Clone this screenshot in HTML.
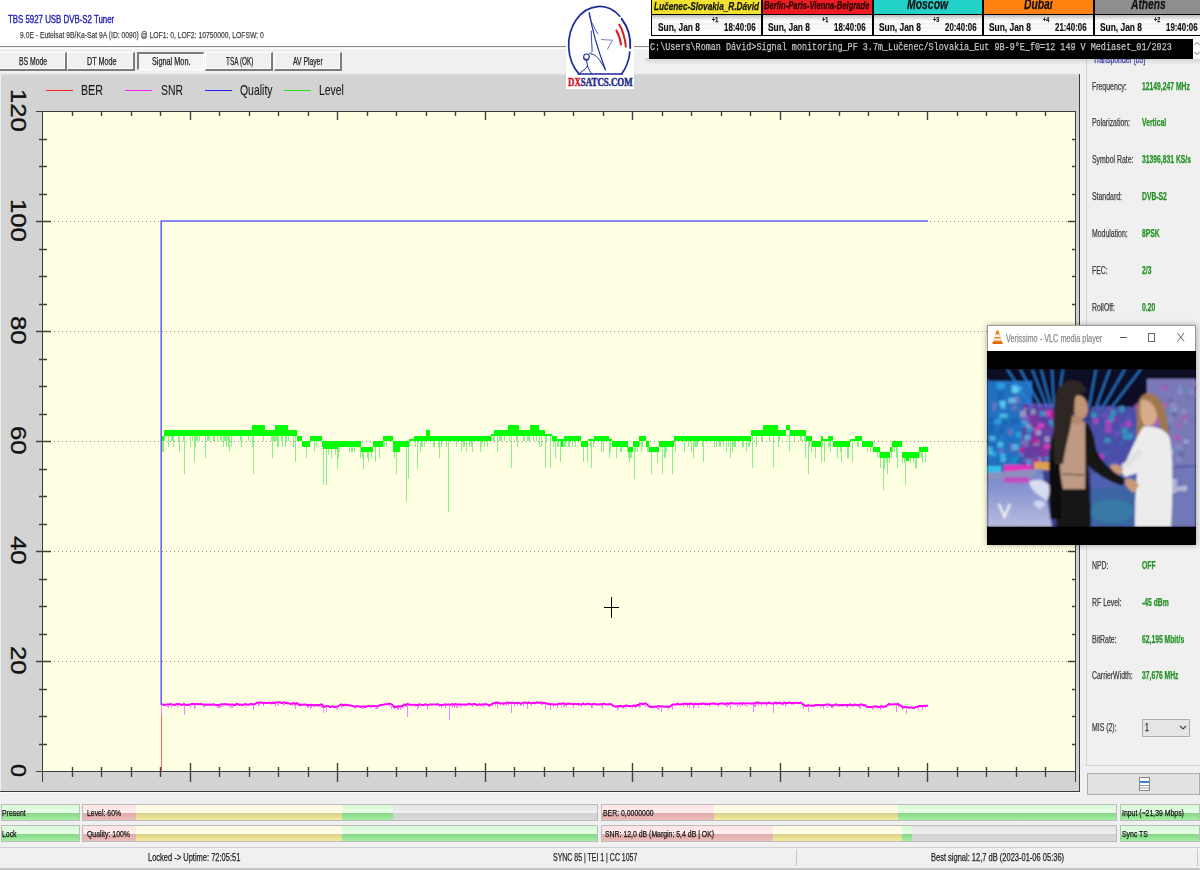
<!DOCTYPE html>
<html><head><meta charset="utf-8">
<style>
html,body{margin:0;padding:0;}
body{width:1200px;height:870px;overflow:hidden;position:relative;background:#f0f0f0;font-family:"Liberation Sans",sans-serif;}
.a{position:absolute;}
.t{position:absolute;white-space:nowrap;transform-origin:0 0;line-height:1;-webkit-text-stroke:0.25px currentColor;}
.tab{position:absolute;top:52px;height:19px;background:#f0f0f0;border-top:1px solid #fff;border-left:1px solid #fff;border-right:2px solid #7c7c7c;border-bottom:2px solid #7c7c7c;box-sizing:border-box;box-shadow:inset -1px -1px 0 #fafafa;}
.bar{position:absolute;height:17px;border:1px solid #bcbcbc;box-sizing:border-box;overflow:hidden;background:linear-gradient(#e4e4e4 0,#efefef 55%,#d2d2d2 55%,#d8d8d8 100%);}
.seg{position:absolute;top:0;bottom:0;}
.pk{background:linear-gradient(#ffe4e4 0,#ffeeee 55%,#e0acac 55%,#eebcbc 100%);}
.yl{background:linear-gradient(#fffce0 0,#fffeea 55%,#d8d08a 55%,#f4ee9c 100%);}
.gr{background:linear-gradient(#dafada 0,#e6fde6 55%,#88d488 55%,#a2f2a2 100%);}
.lbl{font-size:10px;color:#3a3a3a;}
.val{font-size:10px;color:#1e8c1e;font-weight:bold;}
</style></head><body>
<!-- top white header -->
<div class="a" style="left:0;top:0;width:1200px;height:46px;background:#fff"></div>
<div class="a" style="left:0;top:46px;width:1200px;height:1px;background:#8c8c8c"></div><div class="a" style="left:0;top:48px;width:1200px;height:1px;background:#fff"></div>

<!-- tabs -->
<div class="tab" style="left:-1px;width:68px;"></div>
<div class="tab" style="left:67px;width:68px;"></div>
<div class="tab" style="left:137px;width:67px;height:18px;border-top:2px solid #7c7c7c;border-left:2px solid #7c7c7c;border-right:1px solid #fff;border-bottom:1px solid #fff;box-shadow:none;background:#f4f4f4"></div>
<div class="tab" style="left:205px;width:68px;"></div>
<div class="tab" style="left:274px;width:68px;"></div>

<!-- chart panel -->
<div class="a" style="left:1px;top:75px;width:1078px;height:716px;background:#d3d3d3"></div><div class="a" style="left:1px;top:73px;width:1078px;height:2px;background:linear-gradient(#ececec,#dcdcdc)"></div><div class="a" style="left:1px;top:792px;width:1079px;height:1px;background:#fafafa"></div>
<div class="a" style="left:1079px;top:74px;width:1px;height:718px;background:#3a3a3a"></div>
<div class="a" style="left:0;top:791px;width:1080px;height:1px;background:#3a3a3a"></div>
<!-- legend -->
<div class="a" style="left:46px;top:90px;width:27px;height:1px;background:#ff2020"></div>
<div class="a" style="left:125px;top:90px;width:27px;height:1px;background:#ff20ff"></div>
<div class="a" style="left:205px;top:90px;width:27px;height:1px;background:#2020ff"></div>
<div class="a" style="left:284px;top:90px;width:27px;height:1px;background:#20e020"></div>
<div class="t" style="left:29.34px;top:89.10px;font-size:21.66px;color:#111;transform:rotate(90deg) scaleX(1.185);-webkit-text-stroke:0.3px currentColor;">120</div>
<div class="t" style="left:29.34px;top:199.10px;font-size:21.66px;color:#111;transform:rotate(90deg) scaleX(1.185);-webkit-text-stroke:0.3px currentColor;">100</div>
<div class="t" style="left:29.34px;top:316.20px;font-size:21.66px;color:#111;transform:rotate(90deg) scaleX(1.187);-webkit-text-stroke:0.3px currentColor;">80</div>
<div class="t" style="left:29.34px;top:426.20px;font-size:21.66px;color:#111;transform:rotate(90deg) scaleX(1.187);-webkit-text-stroke:0.3px currentColor;">60</div>
<div class="t" style="left:29.34px;top:536.20px;font-size:21.66px;color:#111;transform:rotate(90deg) scaleX(1.187);-webkit-text-stroke:0.3px currentColor;">40</div>
<div class="t" style="left:29.34px;top:646.20px;font-size:21.66px;color:#111;transform:rotate(90deg) scaleX(1.187);-webkit-text-stroke:0.3px currentColor;">20</div>
<div class="t" style="left:29.34px;top:764.00px;font-size:21.66px;color:#111;transform:rotate(90deg) scaleX(1.082);-webkit-text-stroke:0.3px currentColor;">0</div>
<div class="a" style="left:0;top:0;">
</div>
<svg width="1200" height="870" style="position:absolute;left:0;top:0" shape-rendering="crispEdges">
<rect x="42" y="111" width="1033" height="660" fill="#ffffe4"/>
<g stroke="#8c8c8c" stroke-width="1" stroke-dasharray="1 3">
<path d="M46 221.5H1070M46 331.5H1070M46 441.5H1070M46 551.5H1070M46 661.5H1070"/>
</g>
<g stroke="#3c3c3c" stroke-width="1.5" fill="none">
<path d="M36 111.5H1075M36 771.5H1075M42.5 111V782M1075.5 111V782"/>
</g>
<path d="M72.5 767V777M72.5 111V116M101.5 767V777M101.5 111V116M131.5 767V777M131.5 111V116M160.5 767V777M160.5 111V116M190.5 763V782M190.5 111V120M219.5 767V777M219.5 111V116M249.5 767V777M249.5 111V116M278.5 767V777M278.5 111V116M308.5 767V777M308.5 111V116M337.5 763V782M337.5 111V120M367.5 767V777M367.5 111V116M396.5 767V777M396.5 111V116M426.5 767V777M426.5 111V116M455.5 767V777M455.5 111V116M485.5 763V782M485.5 111V120M514.5 767V777M514.5 111V116M544.5 767V777M544.5 111V116M573.5 767V777M573.5 111V116M603.5 767V777M603.5 111V116M632.5 763V782M632.5 111V120M662.5 767V777M662.5 111V116M691.5 767V777M691.5 111V116M721.5 767V777M721.5 111V116M750.5 767V777M750.5 111V116M780.5 763V782M780.5 111V120M809.5 767V777M809.5 111V116M839.5 767V777M839.5 111V116M868.5 767V777M868.5 111V116M898.5 767V777M898.5 111V116M927.5 763V782M927.5 111V120M957.5 767V777M957.5 111V116M986.5 767V777M986.5 111V116M1016.5 767V777M1016.5 111V116M1045.5 767V777M1045.5 111V116M39 744.5H47M1072 744.5H1075M39 716.5H47M1072 716.5H1075M39 689.5H47M1072 689.5H1075M36 661.5H51M1068 661.5H1075M39 634.5H47M1072 634.5H1075M39 606.5H47M1072 606.5H1075M39 579.5H47M1072 579.5H1075M36 551.5H51M1068 551.5H1075M39 524.5H47M1072 524.5H1075M39 496.5H47M1072 496.5H1075M39 469.5H47M1072 469.5H1075M36 441.5H51M1068 441.5H1075M39 414.5H47M1072 414.5H1075M39 386.5H47M1072 386.5H1075M39 359.5H47M1072 359.5H1075M36 331.5H51M1068 331.5H1075M39 304.5H47M1072 304.5H1075M39 276.5H47M1072 276.5H1075M39 249.5H47M1072 249.5H1075M36 221.5H51M1068 221.5H1075M39 194.5H47M1072 194.5H1075M39 166.5H47M1072 166.5H1075M39 139.5H47M1072 139.5H1075" stroke="#404040" stroke-width="1.4" fill="none" shape-rendering="auto"/>
<g fill="#00ff00" shape-rendering="crispEdges"><rect x="161" y="435.5" width="3" height="5.5"/><rect x="164" y="430.0" width="88" height="5.5"/><rect x="252" y="424.5" width="13" height="11.0"/><rect x="265" y="430.0" width="10" height="5.5"/><rect x="275" y="424.5" width="13" height="11.0"/><rect x="288" y="430.0" width="9" height="5.5"/><rect x="297" y="435.5" width="5" height="5.5"/><rect x="302" y="441.0" width="8" height="5.5"/><rect x="310" y="435.5" width="12" height="5.5"/><rect x="322" y="441.0" width="26" height="5.5"/><rect x="323" y="441.0" width="15" height="8.2"/><rect x="348" y="441.0" width="13" height="5.5"/><rect x="361" y="446.5" width="12" height="5.5"/><rect x="373" y="441.0" width="10" height="5.5"/><rect x="383" y="435.5" width="10" height="5.5"/><rect x="393" y="441.0" width="7" height="11.0"/><rect x="400" y="441.0" width="9" height="5.5"/><rect x="409" y="439.4" width="5" height="1.6"/><rect x="414" y="435.5" width="56" height="5.5"/><rect x="426" y="430.0" width="4" height="5.5"/><rect x="465" y="435.5" width="26" height="5.5"/><rect x="491" y="433.9" width="3" height="1.6"/><rect x="494" y="430.0" width="14" height="5.5"/><rect x="508" y="424.5" width="11" height="11.0"/><rect x="519" y="430.0" width="11" height="5.5"/><rect x="530" y="424.5" width="9" height="11.0"/><rect x="539" y="430.0" width="6" height="5.5"/><rect x="545" y="433.9" width="7" height="1.6"/><rect x="552" y="435.5" width="5" height="5.5"/><rect x="557" y="439.4" width="7" height="1.6"/><rect x="561" y="441.0" width="2" height="5.5"/><rect x="564" y="435.5" width="17" height="5.5"/><rect x="581" y="441.0" width="7" height="5.5"/><rect x="588" y="439.4" width="6" height="1.6"/><rect x="594" y="435.5" width="15" height="5.5"/><rect x="609" y="439.4" width="3" height="1.6"/><rect x="612" y="441.0" width="16" height="5.5"/><rect x="628" y="446.5" width="5" height="5.5"/><rect x="633" y="441.0" width="6" height="5.5"/><rect x="639" y="435.5" width="7" height="5.5"/><rect x="646" y="441.0" width="3" height="5.5"/><rect x="649" y="446.5" width="10" height="5.5"/><rect x="659" y="441.0" width="15" height="5.5"/><rect x="674" y="435.5" width="77" height="5.5"/><rect x="751" y="430.0" width="12" height="5.5"/><rect x="763" y="424.5" width="15" height="11.0"/><rect x="778" y="430.0" width="8" height="5.5"/><rect x="786" y="424.5" width="4" height="5.5"/><rect x="790" y="430.0" width="16" height="5.5"/><rect x="806" y="435.5" width="6" height="5.5"/><rect x="812" y="441.0" width="9" height="5.5"/><rect x="821" y="435.5" width="2" height="5.5"/><rect x="823" y="439.4" width="5" height="1.6"/><rect x="828" y="435.5" width="5" height="5.5"/><rect x="833" y="441.0" width="17" height="5.5"/><rect x="850" y="439.4" width="5" height="1.6"/><rect x="855" y="435.5" width="7" height="5.5"/><rect x="862" y="441.0" width="11" height="5.5"/><rect x="873" y="446.5" width="7" height="5.5"/><rect x="880" y="452.0" width="10" height="5.5"/><rect x="890" y="446.5" width="2" height="5.5"/><rect x="892" y="441.0" width="10" height="5.5"/><rect x="902" y="452.0" width="17" height="5.5"/><rect x="906" y="457.5" width="3" height="3.3"/><rect x="919" y="446.5" width="9" height="5.5"/></g>
<path d="M163.0 441.0V451.7M168.0 435.5V447.0M173.0 435.5V447.0M179.0 435.5V451.7M184.0 435.5V474.0M194.0 435.5V462.0M205.0 435.5V457.7M229.0 435.5V451.7M253.0 435.5V474.0M272.0 435.5V457.7M295.0 435.5V462.0M306.0 446.5V457.7M323.3 449.2V485.0M326.7 449.2V485.0M331.3 449.2V457.7M337.3 449.2V469.0M363.3 452.0V469.0M368.7 452.0V462.3M371.3 452.0V457.7M375.7 446.5V462.3M396.7 452.0V474.0M406.7 446.5V501.7M408.7 446.5V479.0M417.7 441.0V469.0M439.3 441.0V457.7M448.7 441.0V512.3M511.7 435.5V468.3M497.7 435.5V451.7M545.0 435.5V468.3M550.0 435.5V468.3M555.7 441.0V457.7M560.7 441.0V462.3M583.7 446.5V462.3M587.0 446.5V462.3M591.7 441.0V468.3M609.7 441.0V457.7M601.0 441.0V451.7M634.0 446.5V479.0M651.6 452.0V473.7M662.0 446.5V473.7M672.7 446.5V473.7M693.0 441.0V457.7M703.7 441.0V462.3M730.0 441.0V457.7M752.7 435.5V468.3M773.7 435.5V468.3M630.7 452.0V457.7M641.0 441.0V451.7M808.0 441.0V473.7M789.7 430.0V451.7M805.0 435.5V457.7M815.0 446.5V457.7M821.0 441.0V462.3M824.0 441.0V462.3M841.7 446.5V462.3M852.0 441.0V462.3M847.0 446.5V457.7M880.0 457.5V468.3M883.7 457.5V490.3M887.0 457.5V473.7M897.0 446.5V468.3M905.7 457.5V485.0M916.3 457.5V468.3M925.7 452.0V462.3M870.0 446.5V451.7M409.7 441.0V446.5M464.0 441.0V446.5M217.4 435.5V441.0M441.8 441.0V446.5M857.9 441.0V446.5M190.7 435.5V446.5M481.9 441.0V446.5M231.4 435.5V446.5M207.2 435.5V441.0M886.8 457.5V463.0M603.5 441.0V452.0M199.9 435.5V441.0M197.6 435.5V441.0M383.6 441.0V446.5M575.6 441.0V446.5M590.6 441.0V446.5M240.8 435.5V441.0M446.9 441.0V446.5M593.7 441.0V446.5M541.8 435.5V446.5M756.6 435.5V446.5M610.0 441.0V452.0M438.6 441.0V446.5M769.7 435.5V441.0M224.6 435.5V441.0M563.8 441.0V446.5M720.0 441.0V446.5M627.9 446.5V452.0M252.3 435.5V446.5M288.2 435.5V441.0M278.3 435.5V446.5M484.6 441.0V446.5M746.9 441.0V446.5M422.2 441.0V446.5M616.7 446.5V457.5M214.6 435.5V441.0M884.7 457.5V468.5M695.2 441.0V446.5M208.4 435.5V441.0M657.1 452.0V463.0M379.7 446.5V457.5M840.6 446.5V452.0M179.3 435.5V446.5M433.9 441.0V446.5M539.7 435.5V441.0M749.7 441.0V446.5M726.8 441.0V452.0M461.1 441.0V452.0M223.6 435.5V446.5M469.3 441.0V446.5M837.8 446.5V457.5M822.9 441.0V446.5M702.4 441.0V446.5M684.3 441.0V452.0M894.7 446.5V452.0M225.5 435.5V441.0M339.4 446.5V452.0M171.2 435.5V441.0M363.0 452.0V457.5M273.4 435.5V441.0M628.5 452.0V457.5M891.1 452.0V457.5M511.3 435.5V446.5M466.5 441.0V452.0M241.2 435.5V446.5M209.6 435.5V441.0M915.3 457.5V468.5M286.2 435.5V441.0M621.6 446.5V452.0M162.2 441.0V446.5M572.5 441.0V446.5M631.5 452.0V457.5M830.9 441.0V452.0M275.6 435.5V441.0M892.9 446.5V452.0M524.7 435.5V441.0M811.4 441.0V452.0M529.5 435.5V441.0M227.7 435.5V441.0M735.5 441.0V446.5M528.1 435.5V441.0M557.0 441.0V446.5M889.5 457.5V463.0M274.2 435.5V441.0M742.0 441.0V446.5M910.6 457.5V463.0M694.6 441.0V446.5M558.6 441.0V446.5M434.1 441.0V446.5M569.4 441.0V446.5M648.9 446.5V452.0M778.7 435.5V446.5M728.0 441.0V446.5M314.9 441.0V452.0M434.0 441.0V446.5M919.0 452.0V457.5M523.3 435.5V441.0M691.8 441.0V446.5M504.1 435.5V441.0M892.6 446.5V452.0M223.6 435.5V441.0M335.5 449.2V454.8M420.4 441.0V452.0M639.4 441.0V446.5M528.8 435.5V441.0M773.7 435.5V441.0M800.5 435.5V441.0M858.0 441.0V446.5M527.7 435.5V441.0M494.0 435.5V441.0M228.4 435.5V446.5M516.3 435.5V441.0M716.5 441.0V446.5M921.7 452.0V457.5M277.6 435.5V446.5M779.0 435.5V441.0M629.9 452.0V463.0M664.8 446.5V452.0M281.3 435.5V441.0M178.4 435.5V441.0M564.8 441.0V446.5M493.9 435.5V441.0M794.0 435.5V441.0M183.4 435.5V441.0M386.1 441.0V446.5M746.2 441.0V446.5M360.4 446.5V457.5M800.2 435.5V441.0M858.2 441.0V446.5M848.7 446.5V457.5M794.8 435.5V441.0M568.8 441.0V446.5M829.7 441.0V446.5M627.5 446.5V452.0M293.8 435.5V446.5M635.6 446.5V452.0M587.7 446.5V452.0M684.0 441.0V452.0M762.0 435.5V441.0M837.7 446.5V452.0M352.1 446.5V452.0M194.3 435.5V441.0M550.4 435.5V441.0M743.4 441.0V446.5M501.1 435.5V441.0M691.9 441.0V452.0M550.7 435.5V446.5M550.4 435.5V441.0M696.9 441.0V446.5M867.9 446.5V452.0M804.6 435.5V441.0M480.7 441.0V452.0M500.2 435.5V441.0M675.4 441.0V452.0M217.9 435.5V441.0M761.7 435.5V441.0M880.7 457.5V463.0M271.4 435.5V441.0M902.2 457.5V463.0M733.2 441.0V446.5M466.7 441.0V452.0M286.5 435.5V441.0M285.5 435.5V446.5M922.5 452.0V463.0M421.4 441.0V446.5M434.8 441.0V446.5M714.4 441.0V446.5M420.6 441.0V452.0M499.0 435.5V441.0M456.0 441.0V446.5M553.9 441.0V446.5M248.3 435.5V441.0M905.3 457.5V463.0M226.3 435.5V441.0M192.3 435.5V441.0M368.9 452.0V457.5M789.1 430.0V435.5M472.6 441.0V452.0M697.8 441.0V446.5M375.5 446.5V452.0M487.4 441.0V446.5M367.7 452.0V457.5M647.3 446.5V452.0M226.1 435.5V441.0M213.0 435.5V441.0M509.1 435.5V441.0M922.6 452.0V463.0M870.9 446.5V452.0M637.6 446.5V452.0M565.1 441.0V446.5M879.7 452.0V457.5M362.3 452.0V457.5M316.4 441.0V446.5M642.9 441.0V446.5M383.8 441.0V446.5M368.9 452.0V457.5M922.8 452.0V457.5M173.7 435.5V441.0M555.4 441.0V446.5M877.0 452.0V457.5M665.6 446.5V457.5M664.2 446.5V457.5M904.3 457.5V463.0M688.1 441.0V446.5M424.2 441.0V446.5M471.6 441.0V446.5M913.1 457.5V463.0M172.9 435.5V441.0M491.5 435.5V441.0M226.6 435.5V446.5M828.0 441.0V446.5M620.1 446.5V452.0M196.6 435.5V441.0M282.5 435.5V446.5M164.8 435.5V441.0M897.8 446.5V452.0M349.0 446.5V452.0M328.7 449.2V454.8M162.8 441.0V452.0M226.2 435.5V441.0M546.6 435.5V441.0M351.9 446.5V452.0M231.5 435.5V441.0M272.1 435.5V441.0M463.4 441.0V446.5M394.7 452.0V457.5M226.6 435.5V441.0M665.0 446.5V457.5M746.7 441.0V452.0M276.3 435.5V441.0M195.5 435.5V446.5M723.4 441.0V446.5M858.1 441.0V446.5M794.2 435.5V441.0M227.1 435.5V441.0M263.8 435.5V441.0M896.0 446.5V457.5M801.4 435.5V441.0M642.2 441.0V446.5M536.3 435.5V441.0M511.6 435.5V441.0M734.4 441.0V446.5M666.4 446.5V452.0M732.5 441.0V452.0M354.9 446.5V452.0M809.3 441.0V446.5M719.9 441.0V446.5M338.5 446.5V457.5M539.9 435.5V446.5M220.7 435.5V441.0M748.7 441.0V446.5M221.3 435.5V441.0M415.8 441.0V446.5M637.2 446.5V452.0M171.5 435.5V441.0M533.6 435.5V441.0M691.5 441.0V452.0M384.5 441.0V446.5M517.5 435.5V446.5M748.9 441.0V446.5" stroke="#7cf07c" stroke-width="1" fill="none" opacity="0.9"/>
<path d="M184 705.5V715M194 705.5V709M204.5 705.5V708M253.5 705.2V710M295 704.5V709M323 706.5V713M326 707.5V712M337.5 707.5V710M363 707.5V709M397 707.5V710M407 705.5V717M417.5 705.5V710M427.5 705.5V709M449 705.5V720M497 704.0V708M511 704.0V713M527 704.0V709M545 704.5V709M550 705.0V710M557 705.0V708M561 705.0V708M592 705.0V708M602 705.0V709M617 707.0V711M661.6 707.5V712M672 706.2V710M693 704.9V709M730 704.6V709M753 704.5V711.5M773.5 704.0V712.5M808 706.5V712M823 706.2V709M880 707.5V710M896 705.0V712M906 708.5V714M925 706.7V708M400.4 707.5V708.7M523.8 704.0V705.6M220.5 705.5V707.5M922.9 706.8V709.8M457.9 705.5V708.3M873.9 707.5V708.6M231.1 705.5V708.0M362.3 707.5V709.2M623.6 707.0V709.3M375.9 707.5V708.7M441.4 705.5V707.5M832.3 706.0V707.8M283.7 703.5V706.4M683.4 704.9V706.8M718.3 704.7V706.6M449.7 705.5V706.7M415.5 705.5V707.1M420.8 705.5V707.3M881.0 707.5V708.9M171.0 705.5V708.0M355.7 707.5V708.6M460.5 705.5V708.2M220.4 705.5V708.4M740.1 704.6V707.3M376.7 707.5V708.6M668.4 707.5V709.8M275.9 703.8V706.8M495.7 704.0V705.6M753.5 704.4V707.0M489.2 705.5V706.6M744.7 704.6V706.4M831.9 706.0V708.1M317.6 706.0V707.2M876.1 707.5V709.3M632.4 707.0V708.3M827.2 706.0V708.0M859.6 706.0V708.1M292.6 704.5V706.3M377.5 707.5V709.0M727.1 704.7V707.0M472.8 705.5V707.0M531.6 704.0V706.3M253.6 705.2V707.5M219.5 705.5V707.5M783.0 704.0V706.1M508.5 704.0V705.7M742.8 704.6V706.4M581.1 705.0V706.5M295.6 704.5V706.6M406.3 705.5V707.2M781.2 704.0V705.4M177.4 705.5V708.2M454.9 705.5V708.0M322.7 706.3V707.9M737.4 704.6V706.6M601.3 705.0V706.7M687.4 704.9V707.0M766.6 704.0V706.7M232.8 705.5V708.3M456.2 705.5V707.8M492.4 704.6V706.2M785.0 704.0V706.9M259.3 704.0V705.9M746.2 704.5V707.2M902.7 708.3V710.3M218.0 705.5V708.4M872.0 707.5V709.6M520.1 704.0V705.9M761.1 704.0V705.4M278.3 703.5V706.4M245.3 705.5V708.2M698.3 704.8V707.5M846.6 706.0V707.2M756.3 704.0V705.0M258.1 704.0V706.1M190.8 705.5V707.9M898.3 705.2V707.4M566.1 705.0V706.9M746.3 704.5V705.7M391.8 706.1V709.0M308.7 706.0V707.5M766.7 704.0V705.0M573.2 705.0V708.0M375.1 707.5V709.1M804.1 705.7V707.2M564.6 705.0V707.1M184.4 705.5V707.3M659.0 707.5V708.6M310.5 706.0V708.8M657.1 707.5V708.7M336.3 707.5V709.3M445.2 705.5V707.5M694.3 704.9V707.3M439.2 705.5V707.3M167.2 705.5V707.1M808.5 706.5V707.6M541.2 704.0V705.4M747.9 704.5V705.9M517.8 704.0V705.5M842.3 706.0V707.2M639.1 705.5V707.7M847.8 706.0V708.0M858.5 706.0V707.1M617.0 707.0V709.8M203.6 705.5V706.5M618.0 707.0V708.8M705.0 704.8V706.2M506.0 704.0V706.4M402.4 706.8V708.0M222.7 705.5V706.8M307.9 706.0V708.3M563.5 705.0V706.9M400.5 707.5V710.0M803.9 705.6V708.6M500.5 704.0V705.2M221.9 705.5V706.7M483.4 705.5V708.3M591.3 705.0V707.5M452.8 705.5V708.0M398.2 707.5V710.1M229.1 705.5V707.9M311.7 706.0V708.1M503.5 704.0V705.6M726.0 704.7V706.6M645.2 705.0V706.5M640.4 705.0V706.8M449.3 705.5V707.4M776.6 704.0V705.1M311.1 706.0V707.1M625.3 707.0V708.7M418.3 705.5V708.4M195.3 705.5V708.0M689.5 704.9V707.8M389.5 705.0V707.4M617.6 707.0V709.6M886.1 706.8V708.0M793.9 704.0V705.2M709.4 704.8V706.7M755.9 704.0V706.6M860.9 706.0V708.6M263.5 704.0V706.0M168.7 705.5V708.4M394.0 707.5V709.9M277.8 703.5V705.0M820.9 706.5V708.4M761.6 704.0V706.2M553.6 705.0V706.8M284.4 703.5V705.3M658.9 707.5V709.5M578.6 705.0V706.3M488.3 705.5V706.7M217.2 705.5V707.7M321.4 706.0V707.8M918.2 707.3V710.3M294.5 704.5V705.8M514.6 704.0V706.8M341.7 706.0V708.1M754.0 704.3V706.9M758.5 704.0V705.6M375.7 707.5V709.0" stroke="#ff80ff" stroke-width="1" fill="none"/>
<path d="M161.5 704.4L163.0 704.6L164.5 705.0L166.0 704.5L167.5 704.5L169.0 704.6L170.5 704.1L172.0 704.5L173.5 704.7L175.0 704.9L176.5 704.0L178.0 704.3L179.5 704.0L181.0 704.9L182.5 704.7L184.0 704.0L185.5 705.1L187.0 705.1L188.5 704.7L190.0 704.6L191.5 704.1L193.0 703.9L194.5 704.5L196.0 704.0L197.5 704.1L199.0 704.2L200.5 703.9L202.0 704.5L203.5 704.4L205.0 704.9L206.5 704.5L208.0 704.7L209.5 704.5L211.0 704.7L212.5 704.4L214.0 704.2L215.5 705.1L217.0 705.1L218.5 704.9L220.0 704.7L221.5 704.3L223.0 704.2L224.5 704.2L226.0 704.0L227.5 704.8L229.0 704.4L230.5 704.9L232.0 704.4L233.5 705.0L235.0 704.9L236.5 703.9L238.0 704.2L239.5 705.0L241.0 704.5L242.5 705.1L244.0 704.4L245.5 704.0L247.0 704.7L248.5 704.8L250.0 704.2L251.5 704.0L253.0 704.3L254.5 704.3L256.0 703.3L257.5 702.5L259.0 702.7L260.5 702.5L262.0 702.5L263.5 703.4L265.0 702.6L266.5 703.1L268.0 702.9L269.5 702.6L271.0 703.3L272.5 702.6L274.0 703.2L275.5 702.5L277.0 702.6L278.5 702.2L280.0 702.2L281.5 703.1L283.0 702.9L284.5 702.3L286.0 703.3L287.5 703.0L289.0 703.4L290.5 703.9L292.0 703.7L293.5 703.0L295.0 704.1L296.5 703.2L298.0 703.7L299.5 705.1L301.0 704.8L302.5 704.8L304.0 704.5L305.5 704.5L307.0 705.1L308.5 704.7L310.0 705.1L311.5 704.8L313.0 704.9L314.5 705.6L316.0 705.0L317.5 705.1L319.0 705.4L320.5 704.6L322.0 704.6L323.5 706.2L325.0 706.9L326.5 706.2L328.0 706.1L329.5 706.8L331.0 707.0L332.5 706.1L334.0 707.0L335.5 707.0L337.0 706.6L338.5 706.2L340.0 705.0L341.5 704.4L343.0 705.6L344.5 704.7L346.0 705.2L347.5 704.7L349.0 705.4L350.5 705.4L352.0 705.8L353.5 706.1L355.0 706.8L356.5 706.0L358.0 706.2L359.5 706.6L361.0 706.9L362.5 706.6L364.0 706.2L365.5 707.0L367.0 706.1L368.5 705.9L370.0 706.2L371.5 706.4L373.0 706.0L374.5 706.1L376.0 706.3L377.5 706.6L379.0 705.6L380.5 705.1L382.0 705.0L383.5 704.6L385.0 704.2L386.5 704.2L388.0 704.1L389.5 703.6L391.0 704.1L392.5 705.0L394.0 707.0L395.5 706.7L397.0 707.1L398.5 705.9L400.0 706.7L401.5 706.2L403.0 705.8L404.5 704.5L406.0 705.1L407.5 704.0L409.0 704.6L410.5 704.8L412.0 705.0L413.5 704.8L415.0 704.7L416.5 704.9L418.0 705.0L419.5 704.3L421.0 704.7L422.5 705.0L424.0 704.9L425.5 704.4L427.0 704.8L428.5 704.9L430.0 704.6L431.5 704.6L433.0 704.4L434.5 704.6L436.0 704.6L437.5 704.0L439.0 704.7L440.5 705.1L442.0 705.0L443.5 704.8L445.0 704.4L446.5 704.8L448.0 704.6L449.5 704.4L451.0 704.9L452.5 704.0L454.0 704.8L455.5 703.9L457.0 704.6L458.5 704.5L460.0 704.2L461.5 704.7L463.0 704.5L464.5 704.6L466.0 705.0L467.5 704.2L469.0 703.9L470.5 704.3L472.0 704.7L473.5 704.1L475.0 704.1L476.5 705.0L478.0 704.7L479.5 704.4L481.0 705.0L482.5 704.3L484.0 704.7L485.5 704.1L487.0 704.4L488.5 704.9L490.0 705.0L491.5 704.4L493.0 703.2L494.5 703.1L496.0 702.8L497.5 702.6L499.0 703.0L500.5 703.4L502.0 703.4L503.5 703.3L505.0 703.5L506.5 702.7L508.0 702.6L509.5 702.9L511.0 702.7L512.5 702.7L514.0 702.9L515.5 703.2L517.0 703.0L518.5 702.8L520.0 703.4L521.5 703.6L523.0 702.9L524.5 702.5L526.0 702.4L527.5 703.4L529.0 702.4L530.5 703.3L532.0 703.1L533.5 702.8L535.0 703.3L536.5 702.4L538.0 702.6L539.5 702.9L541.0 702.4L542.5 703.4L544.0 702.9L545.5 703.2L547.0 703.5L548.5 704.2L550.0 703.9L551.5 704.2L553.0 704.2L554.5 704.4L556.0 704.6L557.5 704.2L559.0 703.6L560.5 704.0L562.0 703.6L563.5 703.4L565.0 704.0L566.5 704.3L568.0 703.6L569.5 703.7L571.0 703.8L572.5 704.2L574.0 704.0L575.5 704.1L577.0 704.3L578.5 703.9L580.0 704.4L581.5 704.5L583.0 703.5L584.5 704.5L586.0 704.3L587.5 703.6L589.0 703.9L590.5 704.2L592.0 704.5L593.5 703.9L595.0 704.1L596.5 704.5L598.0 704.4L599.5 704.5L601.0 704.0L602.5 704.2L604.0 703.6L605.5 704.3L607.0 704.4L608.5 704.2L610.0 704.3L611.5 704.3L613.0 705.7L614.5 706.4L616.0 706.6L617.5 706.0L619.0 706.3L620.5 705.8L622.0 706.5L623.5 706.4L625.0 705.8L626.5 705.5L628.0 705.9L629.5 706.1L631.0 706.3L632.5 706.0L634.0 705.4L635.5 706.4L637.0 705.0L638.5 705.1L640.0 703.6L641.5 703.8L643.0 704.3L644.5 703.6L646.0 703.6L647.5 705.0L649.0 706.1L650.5 706.9L652.0 706.7L653.5 707.0L655.0 706.5L656.5 707.0L658.0 706.0L659.5 706.2L661.0 706.5L662.5 706.2L664.0 706.8L665.5 706.7L667.0 706.5L668.5 706.9L670.0 706.6L671.5 705.3L673.0 704.5L674.5 704.4L676.0 704.5L677.5 703.6L679.0 704.4L680.5 704.5L682.0 704.0L683.5 704.0L685.0 703.6L686.5 704.0L688.0 703.9L689.5 704.0L691.0 703.3L692.5 704.4L694.0 703.9L695.5 703.7L697.0 704.2L698.5 703.9L700.0 703.8L701.5 704.1L703.0 703.3L704.5 703.9L706.0 703.7L707.5 704.3L709.0 704.3L710.5 703.5L712.0 703.7L713.5 703.3L715.0 703.7L716.5 704.1L718.0 704.2L719.5 703.7L721.0 703.5L722.5 703.3L724.0 703.8L725.5 704.2L727.0 703.2L728.5 704.0L730.0 703.1L731.5 703.3L733.0 703.3L734.5 703.8L736.0 703.4L737.5 703.4L739.0 703.7L740.5 703.1L742.0 703.8L743.5 703.1L745.0 703.6L746.5 703.2L748.0 703.2L749.5 703.6L751.0 703.4L752.5 703.4L754.0 703.2L755.5 703.1L757.0 702.6L758.5 702.6L760.0 703.2L761.5 703.2L763.0 703.0L764.5 703.4L766.0 703.1L767.5 703.4L769.0 702.7L770.5 703.3L772.0 703.4L773.5 703.5L775.0 702.8L776.5 702.8L778.0 703.5L779.5 702.7L781.0 703.6L782.5 703.5L784.0 702.6L785.5 702.7L787.0 703.3L788.5 702.7L790.0 702.5L791.5 703.4L793.0 702.9L794.5 703.3L796.0 702.6L797.5 702.9L799.0 703.2L800.5 702.6L802.0 703.5L803.5 704.7L805.0 705.6L806.5 706.1L808.0 705.0L809.5 705.5L811.0 705.8L812.5 705.5L814.0 705.7L815.5 705.1L817.0 705.0L818.5 705.0L820.0 704.9L821.5 705.5L823.0 705.3L824.5 705.1L826.0 704.6L827.5 704.6L829.0 704.6L830.5 705.4L832.0 705.6L833.5 705.5L835.0 704.5L836.5 704.5L838.0 705.5L839.5 705.0L841.0 705.3L842.5 704.8L844.0 705.0L845.5 705.0L847.0 704.9L848.5 705.1L850.0 704.4L851.5 705.2L853.0 705.4L854.5 704.6L856.0 704.9L857.5 705.3L859.0 704.9L860.5 704.6L862.0 704.6L863.5 705.2L865.0 705.0L866.5 706.5L868.0 706.9L869.5 706.7L871.0 706.9L872.5 706.7L874.0 706.4L875.5 706.6L877.0 706.5L878.5 707.1L880.0 706.9L881.5 706.2L883.0 707.0L884.5 706.8L886.0 706.2L887.5 705.3L889.0 703.9L890.5 704.5L892.0 704.5L893.5 704.2L895.0 704.3L896.5 704.3L898.0 703.9L899.5 705.3L901.0 705.6L902.5 707.0L904.0 707.5L905.5 706.9L907.0 707.3L908.5 707.7L910.0 707.6L911.5 707.2L913.0 708.0L914.5 707.7L916.0 706.9L917.5 706.8L919.0 706.1L920.5 706.0L922.0 705.7L923.5 706.3L925.0 705.8L926.5 705.8L928.0 705.8" stroke="#ff00ff" stroke-width="2" fill="none" shape-rendering="auto"/>
<path d="M161.5 771V716" stroke="#ff6060" stroke-width="1.5"/>
<path d="M161.5 716V705" stroke="#ff80d0" stroke-width="1.5"/>
<path d="M161.2 705V221H928" stroke="#6464f6" stroke-width="1.6" fill="none" shape-rendering="auto"/>
<path d="M611.5 597V618M604 607.5H619" stroke="#000" stroke-width="1.6"/>
</svg>

<!-- right panel -->
<div class="a" style="left:1086px;top:36px;width:1px;height:730px;background:#d4d4d4"></div>
<div class="a" style="left:1086px;top:765px;width:114px;height:1px;background:#d4d4d4"></div>
<div class="a" style="left:1142px;top:719px;width:48px;height:18px;box-sizing:border-box;border:1px solid #adadad;background:#e5e5e5"></div>
<svg class="a" style="left:1179px;top:725px" width="8" height="6"><path d="M1 1L4 4L7 1" stroke="#444" stroke-width="1.2" fill="none"/></svg>
<div class="a" style="left:1087px;top:773px;width:113px;height:22px;box-sizing:border-box;border:1px solid #adadad;background:#e1e1e1"></div>
<svg class="a" style="left:1139px;top:777px" width="11" height="14"><rect x="0.5" y="0.5" width="10" height="13" fill="#fff" stroke="#888"/><rect x="1" y="4" width="9" height="2" fill="#3c84d8"/><path d="M1 8.5H10M1 11H10" stroke="#999"/></svg>

<!-- bottom bars -->
<div class="bar gr" style="left:1px;top:804px;width:79px;"></div>
<div class="bar" style="left:82px;top:804px;width:516px;"><div class="seg pk" style="left:0;width:53px"></div><div class="seg yl" style="left:53px;width:206px"></div><div class="seg gr" style="left:259px;width:51px"></div></div>
<div class="bar" style="left:601px;top:804px;width:516px;"><div class="seg pk" style="left:0;width:112px"></div><div class="seg yl" style="left:112px;width:184px"></div><div class="seg gr" style="left:296px;width:220px"></div></div>
<div class="bar gr" style="left:1120px;top:804px;width:80px;"></div>
<div class="bar gr" style="left:1px;top:825px;width:79px;"></div>
<div class="bar" style="left:82px;top:825px;width:516px;"><div class="seg pk" style="left:0;width:53px"></div><div class="seg yl" style="left:53px;width:206px"></div><div class="seg gr" style="left:259px;width:257px"></div></div>
<div class="bar" style="left:601px;top:825px;width:516px;"><div class="seg pk" style="left:0;width:171px"></div><div class="seg yl" style="left:171px;width:129px"></div><div class="seg gr" style="left:300px;width:10px"></div></div>
<div class="bar gr" style="left:1120px;top:825px;width:80px;"></div>
<!-- status bar -->
<div class="a" style="left:0;top:847px;width:1200px;height:1px;background:#d0d0d0"></div>
<div class="a" style="left:796px;top:849px;width:1px;height:17px;background:#c8c8c8"></div><div class="a" style="left:1197px;top:849px;width:1px;height:17px;background:#c8c8c8"></div>
<div class="a" style="left:0;top:868px;width:1200px;height:2px;background:#c4c4c4"></div>

<div class="t" style="left:7.50px;top:13.70px;font-size:11.34px;color:#2222b4;transform:scaleX(0.694);font-family:'Liberation Sans',sans-serif;-webkit-text-stroke:0.4px currentColor;">TBS 5927 USB DVB-S2 Tuner</div>
<div class="t" style="left:20.00px;top:30.00px;font-size:9.45px;color:#454545;transform:scaleX(0.717);font-family:'Liberation Sans',sans-serif;">9.0E - Eutelsat 9B/Ka-Sat 9A (ID: 0090) @ LOF1: 0, LOF2: 10750000, LOFSW: 0</div>
<div class="t" style="left:19.20px;top:56.51px;font-size:10.03px;color:#1e1e1e;transform:scaleX(0.679);font-family:'Liberation Sans',sans-serif;">BS Mode</div>
<div class="t" style="left:87.00px;top:56.51px;font-size:10.03px;color:#1e1e1e;transform:scaleX(0.721);font-family:'Liberation Sans',sans-serif;">DT Mode</div>
<div class="t" style="left:151.50px;top:57.31px;font-size:10.03px;color:#1e1e1e;transform:scaleX(0.727);font-family:'Liberation Sans',sans-serif;">Signal Mon.</div>
<div class="t" style="left:225.70px;top:56.51px;font-size:10.03px;color:#1e1e1e;transform:scaleX(0.641);font-family:'Liberation Sans',sans-serif;">TSA (OK)</div>
<div class="t" style="left:292.70px;top:56.51px;font-size:10.03px;color:#1e1e1e;transform:scaleX(0.677);font-family:'Liberation Sans',sans-serif;">AV Player</div>
<div class="t" style="left:81.30px;top:82.26px;font-size:15.41px;color:#1a1a1a;transform:scaleX(0.692);font-family:'Liberation Sans',sans-serif;-webkit-text-stroke:0.1px currentColor;">BER</div>
<div class="t" style="left:161.30px;top:82.26px;font-size:15.41px;color:#1a1a1a;transform:scaleX(0.673);font-family:'Liberation Sans',sans-serif;-webkit-text-stroke:0.1px currentColor;">SNR</div>
<div class="t" style="left:240.00px;top:82.26px;font-size:15.41px;color:#1a1a1a;transform:scaleX(0.678);font-family:'Liberation Sans',sans-serif;-webkit-text-stroke:0.1px currentColor;">Quality</div>
<div class="t" style="left:319.20px;top:82.26px;font-size:15.41px;color:#1a1a1a;transform:scaleX(0.673);font-family:'Liberation Sans',sans-serif;-webkit-text-stroke:0.1px currentColor;">Level</div>
<div class="t" style="left:1092.00px;top:81.53px;font-size:10.00px;color:#3c3c3c;transform:scaleX(0.691);font-family:'Liberation Sans',sans-serif;">Frequency:</div>
<div class="t" style="left:1142.30px;top:81.53px;font-size:10.00px;font-weight:bold;color:#239023;transform:scaleX(0.677);font-family:'Liberation Sans',sans-serif;">12149,247 MHz</div>
<div class="t" style="left:1092.00px;top:118.43px;font-size:10.00px;color:#3c3c3c;transform:scaleX(0.691);font-family:'Liberation Sans',sans-serif;">Polarization:</div>
<div class="t" style="left:1142.30px;top:118.43px;font-size:10.00px;font-weight:bold;color:#239023;transform:scaleX(0.677);font-family:'Liberation Sans',sans-serif;">Vertical</div>
<div class="t" style="left:1092.00px;top:155.33px;font-size:10.00px;color:#3c3c3c;transform:scaleX(0.691);font-family:'Liberation Sans',sans-serif;">Symbol Rate:</div>
<div class="t" style="left:1142.30px;top:155.33px;font-size:10.00px;font-weight:bold;color:#239023;transform:scaleX(0.677);font-family:'Liberation Sans',sans-serif;">31396,831 KS/s</div>
<div class="t" style="left:1092.00px;top:192.23px;font-size:10.00px;color:#3c3c3c;transform:scaleX(0.691);font-family:'Liberation Sans',sans-serif;">Standard:</div>
<div class="t" style="left:1142.30px;top:192.23px;font-size:10.00px;font-weight:bold;color:#239023;transform:scaleX(0.677);font-family:'Liberation Sans',sans-serif;">DVB-S2</div>
<div class="t" style="left:1092.00px;top:229.13px;font-size:10.00px;color:#3c3c3c;transform:scaleX(0.691);font-family:'Liberation Sans',sans-serif;">Modulation:</div>
<div class="t" style="left:1142.30px;top:229.13px;font-size:10.00px;font-weight:bold;color:#239023;transform:scaleX(0.677);font-family:'Liberation Sans',sans-serif;">8PSK</div>
<div class="t" style="left:1092.00px;top:266.03px;font-size:10.00px;color:#3c3c3c;transform:scaleX(0.691);font-family:'Liberation Sans',sans-serif;">FEC:</div>
<div class="t" style="left:1142.30px;top:266.03px;font-size:10.00px;font-weight:bold;color:#239023;transform:scaleX(0.677);font-family:'Liberation Sans',sans-serif;">2/3</div>
<div class="t" style="left:1092.00px;top:302.93px;font-size:10.00px;color:#3c3c3c;transform:scaleX(0.691);font-family:'Liberation Sans',sans-serif;">RollOff:</div>
<div class="t" style="left:1142.30px;top:302.93px;font-size:10.00px;font-weight:bold;color:#239023;transform:scaleX(0.677);font-family:'Liberation Sans',sans-serif;">0.20</div>
<div class="t" style="left:1092.00px;top:561.23px;font-size:10.00px;color:#3c3c3c;transform:scaleX(0.691);font-family:'Liberation Sans',sans-serif;">NPD:</div>
<div class="t" style="left:1142.30px;top:561.23px;font-size:10.00px;font-weight:bold;color:#239023;transform:scaleX(0.677);font-family:'Liberation Sans',sans-serif;">OFF</div>
<div class="t" style="left:1092.00px;top:597.93px;font-size:10.00px;color:#3c3c3c;transform:scaleX(0.691);font-family:'Liberation Sans',sans-serif;">RF Level:</div>
<div class="t" style="left:1142.30px;top:597.93px;font-size:10.00px;font-weight:bold;color:#239023;transform:scaleX(0.677);font-family:'Liberation Sans',sans-serif;">-45 dBm</div>
<div class="t" style="left:1092.00px;top:634.63px;font-size:10.00px;color:#3c3c3c;transform:scaleX(0.691);font-family:'Liberation Sans',sans-serif;">BitRate:</div>
<div class="t" style="left:1142.30px;top:634.63px;font-size:10.00px;font-weight:bold;color:#239023;transform:scaleX(0.677);font-family:'Liberation Sans',sans-serif;">62,195 Mbit/s</div>
<div class="t" style="left:1092.00px;top:671.33px;font-size:10.00px;color:#3c3c3c;transform:scaleX(0.691);font-family:'Liberation Sans',sans-serif;">CarrierWidth:</div>
<div class="t" style="left:1142.30px;top:671.33px;font-size:10.00px;font-weight:bold;color:#239023;transform:scaleX(0.677);font-family:'Liberation Sans',sans-serif;">37,676 MHz</div>
<div class="t" style="left:1092.00px;top:722.53px;font-size:10.00px;color:#3c3c3c;transform:scaleX(0.691);font-family:'Liberation Sans',sans-serif;">MIS (2):</div>
<div class="t" style="left:1145.00px;top:722.53px;font-size:10.00px;color:#222;transform:scaleX(0.691);font-family:'Liberation Sans',sans-serif;">1</div>
<div class="t" style="left:1092.50px;top:54.53px;font-size:10.00px;color:#3a3ab0;transform:scaleX(0.691);font-family:'Liberation Sans',sans-serif;">Transponder [b5]</div>
<div class="t" style="left:1.60px;top:808.48px;font-size:9.59px;color:#141414;transform:scaleX(0.720);font-family:'Liberation Sans',sans-serif;">Present</div>
<div class="t" style="left:86.70px;top:808.48px;font-size:9.59px;color:#141414;transform:scaleX(0.720);font-family:'Liberation Sans',sans-serif;">Level: 60%</div>
<div class="t" style="left:603.30px;top:808.48px;font-size:9.59px;color:#141414;transform:scaleX(0.720);font-family:'Liberation Sans',sans-serif;">BER: 0,0000000</div>
<div class="t" style="left:1121.70px;top:808.48px;font-size:9.59px;color:#141414;transform:scaleX(0.720);font-family:'Liberation Sans',sans-serif;">Input (~21,39 Mbps)</div>
<div class="t" style="left:1.60px;top:828.88px;font-size:9.59px;color:#141414;transform:scaleX(0.720);font-family:'Liberation Sans',sans-serif;">Lock</div>
<div class="t" style="left:86.70px;top:828.88px;font-size:9.59px;color:#141414;transform:scaleX(0.720);font-family:'Liberation Sans',sans-serif;">Quality: 100%</div>
<div class="t" style="left:605.00px;top:828.88px;font-size:9.59px;color:#141414;transform:scaleX(0.720);font-family:'Liberation Sans',sans-serif;">SNR: 12,0 dB (Margin: 5,4 dB | OK)</div>
<div class="t" style="left:1121.70px;top:828.88px;font-size:9.59px;color:#141414;transform:scaleX(0.720);font-family:'Liberation Sans',sans-serif;">Sync TS</div>
<div class="t" style="left:147.80px;top:852.07px;font-size:10.90px;color:#222;transform:scaleX(0.689);font-family:'Liberation Sans',sans-serif;">Locked -&gt; Uptime: 72:05:51</div>
<div class="t" style="left:553.40px;top:852.07px;font-size:10.90px;color:#222;transform:scaleX(0.639);font-family:'Liberation Sans',sans-serif;">SYNC 85 | TEI 1 | CC 1057</div>
<div class="t" style="left:931.00px;top:852.07px;font-size:10.90px;color:#222;transform:scaleX(0.689);font-family:'Liberation Sans',sans-serif;">Best signal: 12,7 dB (2023-01-06 05:36)</div>
<div class="a" style="left:566px;top:0;width:68px;height:89px;background:#fff"></div>
<svg class="a" style="left:560px;top:0" width="80" height="92" viewBox="560 0 80 92">
<g fill="none" stroke="#1c2a9c" stroke-linecap="round">
<path d="M579 74 A30 37.7 0 0 1 619.8 16.2" stroke-width="1.7"/>
<path d="M621.6 18.8 A30 37.7 0 0 1 630.2 48" stroke-width="1.9"/>
<path d="M629.8 52 A30 37.7 0 0 1 621.5 74" stroke-width="1.7"/>
<path d="M578.5 74H622" stroke-width="1.7"/>
<path d="M589.3 12.5 C 592 30, 598 50, 605.5 70" stroke-width="1.2"/>
<path d="M589.3 12.5 C 587 14, 594 28, 598 34" stroke-width="0.8"/>
<path d="M591.3 31 C 591 40, 592.5 48, 592 51.5 C 591 53, 590 53.5, 589 54" stroke-width="0.9"/>
<path d="M591 54 C 596 54, 600 60, 605 69" stroke-width="1"/>
<circle cx="586.5" cy="56.8" r="2.8" stroke-width="1.1"/>
<path d="M583.5 58 C 584 61, 587 61, 588.5 59.5 M586.5 60 L587.5 66 C 585 70, 581 72, 578.5 74 M587.5 66 C 589 70, 590 72, 592 74" stroke-width="1"/>
</g>
<path d="M601 39.5 L612.5 40.2 L607.3 49.5" fill="none" stroke="#6a78b8" stroke-width="0.9"/>
<path d="M616 29.8 C 618.5 34, 620.5 40, 621.2 45.3" fill="none" stroke="#d42020" stroke-width="2"/>
<path d="M619 24 C 622.5 30, 625 38, 626 47.3" fill="none" stroke="#d42020" stroke-width="2"/>
<text x="568" y="85.8" font-family="Liberation Serif" font-weight="bold" font-size="11.5" textLength="64.6" lengthAdjust="spacingAndGlyphs" stroke-width="0.45"><tspan fill="#cc2030" stroke="#cc2030">DX</tspan><tspan fill="#1c2a88" stroke="#1c2a88">SATCS.COM</tspan></text>
</svg>
<div class="a" style="left:651px;top:0;width:549px;height:36px;background:#000"></div>
<div class="a" style="left:652px;top:0;width:109px;height:14px;background:#f2e22e"></div>
<div class="a" style="left:652px;top:15px;width:109px;height:19.5px;background:linear-gradient(#bcbcbc 0,#e0e0e0 3px,#f4f4f4 5px,#fff 7px,#eee 9px,#fff 11px,#f0f0f0 13px,#fff 15px,#fff 100%)"></div>
<div class="a" style="left:763px;top:0;width:109px;height:14px;background:#ee1c24"></div>
<div class="a" style="left:763px;top:15px;width:109px;height:19.5px;background:linear-gradient(#bcbcbc 0,#e0e0e0 3px,#f4f4f4 5px,#fff 7px,#eee 9px,#fff 11px,#f0f0f0 13px,#fff 15px,#fff 100%)"></div>
<div class="a" style="left:874px;top:0;width:108px;height:14px;background:#22d2c8"></div>
<div class="a" style="left:874px;top:15px;width:108px;height:19.5px;background:linear-gradient(#bcbcbc 0,#e0e0e0 3px,#f4f4f4 5px,#fff 7px,#eee 9px,#fff 11px,#f0f0f0 13px,#fff 15px,#fff 100%)"></div>
<div class="a" style="left:984px;top:0;width:109px;height:14px;background:#ff8210"></div>
<div class="a" style="left:984px;top:15px;width:109px;height:19.5px;background:linear-gradient(#bcbcbc 0,#e0e0e0 3px,#f4f4f4 5px,#fff 7px,#eee 9px,#fff 11px,#f0f0f0 13px,#fff 15px,#fff 100%)"></div>
<div class="a" style="left:1095px;top:0;width:109px;height:14px;background:#8e8e8e"></div>
<div class="a" style="left:1095px;top:15px;width:109px;height:19.5px;background:linear-gradient(#bcbcbc 0,#e0e0e0 3px,#f4f4f4 5px,#fff 7px,#eee 9px,#fff 11px,#f0f0f0 13px,#fff 15px,#fff 100%)"></div>
<div class="t" style="left:657.50px;top:20.75px;font-size:11.63px;font-weight:bold;color:#0a0a0a;transform:scaleX(0.722);font-family:'Liberation Sans',sans-serif;-webkit-text-stroke:0.15px currentColor;">Sun, Jan 8</div>
<div class="t" style="left:723.50px;top:20.75px;font-size:11.63px;font-weight:bold;color:#0a0a0a;transform:scaleX(0.677);font-family:'Liberation Sans',sans-serif;-webkit-text-stroke:0.15px currentColor;">18:40:06</div>
<div class="t" style="left:711.80px;top:16.45px;font-size:7.27px;font-weight:bold;color:#222;transform:scaleX(0.748);font-family:'Liberation Sans',sans-serif;">+1</div>
<div class="t" style="left:768.00px;top:20.75px;font-size:11.63px;font-weight:bold;color:#0a0a0a;transform:scaleX(0.722);font-family:'Liberation Sans',sans-serif;-webkit-text-stroke:0.15px currentColor;">Sun, Jan 8</div>
<div class="t" style="left:834.00px;top:20.75px;font-size:11.63px;font-weight:bold;color:#0a0a0a;transform:scaleX(0.677);font-family:'Liberation Sans',sans-serif;-webkit-text-stroke:0.15px currentColor;">18:40:06</div>
<div class="t" style="left:822.30px;top:16.45px;font-size:7.27px;font-weight:bold;color:#222;transform:scaleX(0.748);font-family:'Liberation Sans',sans-serif;">+1</div>
<div class="t" style="left:878.50px;top:20.75px;font-size:11.63px;font-weight:bold;color:#0a0a0a;transform:scaleX(0.722);font-family:'Liberation Sans',sans-serif;-webkit-text-stroke:0.15px currentColor;">Sun, Jan 8</div>
<div class="t" style="left:944.50px;top:20.75px;font-size:11.63px;font-weight:bold;color:#0a0a0a;transform:scaleX(0.677);font-family:'Liberation Sans',sans-serif;-webkit-text-stroke:0.15px currentColor;">20:40:06</div>
<div class="t" style="left:932.80px;top:16.45px;font-size:7.27px;font-weight:bold;color:#222;transform:scaleX(0.748);font-family:'Liberation Sans',sans-serif;">+3</div>
<div class="t" style="left:989.00px;top:20.75px;font-size:11.63px;font-weight:bold;color:#0a0a0a;transform:scaleX(0.722);font-family:'Liberation Sans',sans-serif;-webkit-text-stroke:0.15px currentColor;">Sun, Jan 8</div>
<div class="t" style="left:1055.00px;top:20.75px;font-size:11.63px;font-weight:bold;color:#0a0a0a;transform:scaleX(0.677);font-family:'Liberation Sans',sans-serif;-webkit-text-stroke:0.15px currentColor;">21:40:06</div>
<div class="t" style="left:1043.30px;top:16.45px;font-size:7.27px;font-weight:bold;color:#222;transform:scaleX(0.748);font-family:'Liberation Sans',sans-serif;">+4</div>
<div class="t" style="left:1099.50px;top:20.75px;font-size:11.63px;font-weight:bold;color:#0a0a0a;transform:scaleX(0.722);font-family:'Liberation Sans',sans-serif;-webkit-text-stroke:0.15px currentColor;">Sun, Jan 8</div>
<div class="t" style="left:1165.50px;top:20.75px;font-size:11.63px;font-weight:bold;color:#0a0a0a;transform:scaleX(0.677);font-family:'Liberation Sans',sans-serif;-webkit-text-stroke:0.15px currentColor;">19:40:06</div>
<div class="t" style="left:1153.80px;top:16.45px;font-size:7.27px;font-weight:bold;color:#222;transform:scaleX(0.748);font-family:'Liberation Sans',sans-serif;">+2</div>
<div class="t" style="left:653.80px;top:0.15px;font-size:11.63px;font-weight:bold;font-style:italic;color:#111;transform:scaleX(0.710);font-family:'Liberation Sans',sans-serif;">Lučenec-Slovakia_R.Dávid</div>
<div class="t" style="left:764.20px;top:0.74px;font-size:10.47px;font-weight:bold;font-style:italic;color:#2a0000;transform:scaleX(0.730);font-family:'Liberation Sans',sans-serif;">Berlin-Paris-Vienna-Belgrade</div>
<div class="t" style="left:907.00px;top:-2.68px;font-size:14.97px;font-weight:bold;font-style:italic;color:#111;transform:scaleX(0.696);font-family:'Liberation Sans',sans-serif;">Moscow</div>
<div class="t" style="left:1024.20px;top:-2.68px;font-size:14.97px;font-weight:bold;font-style:italic;color:#111;transform:scaleX(0.688);font-family:'Liberation Sans',sans-serif;">Dubai</div>
<div class="t" style="left:1131.03px;top:-2.68px;font-size:14.97px;font-weight:bold;font-style:italic;color:#111;transform:scaleX(0.685);font-family:'Liberation Sans',sans-serif;">Athens</div>
<div class="a" style="left:645px;top:58px;width:555px;height:7px;background:linear-gradient(rgba(0,0,0,0.12),rgba(0,0,0,0))"></div>
<div class="a" style="left:649px;top:36px;width:551px;height:3px;background:#fff"></div>
<div class="a" style="left:649px;top:39px;width:544px;height:20px;background:#000"></div>
<div class="a" style="left:1193px;top:36px;width:7px;height:23px;background:#fff"></div>
<svg class="a" style="left:1194px;top:41px" width="6" height="16"><path d="M0.5 4L3 1.5L5.5 4M0.5 11L3 13.5L5.5 11" stroke="#666" fill="none" stroke-width="1"/></svg>
<div class="t" style="left:649.70px;top:41.51px;font-size:11.08px;color:#c4c4c4;transform:scaleX(0.762);font-family:'Liberation Mono',monospace;">C:\Users\Roman Dávid&gt;Signal monitoring_PF 3.7m_Lučenec/Slovakia_Eut 9B-9°E_f0=12 149 V Mediaset_01/2023</div>
<div class="a" style="left:987px;top:325px;width:209px;height:220px;box-shadow:0 0 6px rgba(0,0,0,0.35);background:#000"></div>
<div class="a" style="left:987px;top:325px;width:209px;height:26px;background:#fff;box-sizing:border-box;border:1px solid #9a9a9a;border-bottom:none"></div>
<svg class="a" style="left:992px;top:329px" width="11" height="16"><path d="M4.5 1.5H6.5L10 14H1Z" fill="#f08010"/><path d="M3.6 5.5H7.4L8 8H3Z" fill="#fff"/><path d="M2.6 9.5H8.4L9 11.5H2Z" fill="#fff"/><rect x="0.5" y="13" width="10" height="2" fill="#e06a00"/></svg>
<div class="t" style="left:1006.00px;top:332.59px;font-size:10.76px;color:#8a8a8a;transform:scaleX(0.680);font-family:'Liberation Sans',sans-serif;">Verissimo - VLC media player</div>
<svg class="a" style="left:1110px;top:328px" width="86" height="20"><path d="M10 9.5H17" stroke="#555" stroke-width="1"/><rect x="38.5" y="5.5" width="6" height="8" fill="none" stroke="#666" stroke-width="1"/><path d="M67.5 5L74 13.5M74 5L67.5 13.5" stroke="#666" stroke-width="1"/></svg>
<svg class="a" style="left:987px;top:369px" width="209" height="158" viewBox="0 0 209 158">
<defs>
<filter id="bl" x="-5%" y="-5%" width="110%" height="110%"><feGaussianBlur stdDeviation="0.8"/></filter>
<linearGradient id="flr" x1="0" y1="0" x2="0" y2="1"><stop offset="0" stop-color="#7080c8"/><stop offset="1" stop-color="#b8bce0"/></linearGradient>
</defs>
<g filter="url(#bl)">
<rect width="209" height="158" fill="#3a3f8a"/>
<path d="M0 0H209V10L165 22L150 40H60L0 10Z" fill="#0c1028"/>
<rect x="0" y="12" width="45" height="95" fill="#2070c0"/>
<rect x="35" y="35" width="35" height="62" fill="#6040a0"/>
<rect x="104" y="38" width="60" height="65" fill="#4850a8"/>
<rect x="160" y="10" width="49" height="100" fill="#7a7ab8"/>
<rect x="9.5" y="59.9" width="6" height="8" fill="#2060b0" opacity="0.7"/><rect x="25.0" y="17.8" width="5" height="6" fill="#60d0f0" opacity="0.7"/><rect x="22.0" y="28.9" width="8" height="6" fill="#8070c0" opacity="0.7"/><rect x="33.5" y="53.9" width="8" height="5" fill="#1880c8" opacity="0.7"/><rect x="25.4" y="88.4" width="8" height="6" fill="#30b0e8" opacity="0.7"/><rect x="26.9" y="17.6" width="8" height="5" fill="#60d0f0" opacity="0.7"/><rect x="31.2" y="84.5" width="6" height="6" fill="#8070c0" opacity="0.7"/><rect x="28.8" y="89.3" width="8" height="6" fill="#2060b0" opacity="0.7"/><rect x="29.1" y="62.8" width="5" height="6" fill="#30b0e8" opacity="0.7"/><rect x="1.4" y="55.5" width="6" height="8" fill="#2060b0" opacity="0.7"/><rect x="31.2" y="87.3" width="6" height="8" fill="#2060b0" opacity="0.7"/><rect x="23.0" y="59.0" width="6" height="8" fill="#1880c8" opacity="0.7"/><rect x="36.2" y="72.0" width="5" height="6" fill="#8070c0" opacity="0.7"/><rect x="26.9" y="26.4" width="6" height="8" fill="#8070c0" opacity="0.7"/><rect x="22.8" y="74.8" width="5" height="8" fill="#8070c0" opacity="0.7"/><rect x="10.7" y="23.0" width="6" height="8" fill="#2060b0" opacity="0.7"/><rect x="3.5" y="82.5" width="6" height="5" fill="#30b0e8" opacity="0.7"/><rect x="11.8" y="79.7" width="5" height="5" fill="#8070c0" opacity="0.7"/><rect x="24.6" y="16.0" width="8" height="8" fill="#60d0f0" opacity="0.7"/><rect x="22.0" y="93.1" width="6" height="8" fill="#1880c8" opacity="0.7"/><rect x="39.9" y="39.3" width="5" height="5" fill="#8070c0" opacity="0.7"/><rect x="21.4" y="95.5" width="6" height="6" fill="#8070c0" opacity="0.7"/><rect x="10.5" y="72.7" width="6" height="6" fill="#60d0f0" opacity="0.7"/><rect x="38.3" y="90.9" width="6" height="6" fill="#2060b0" opacity="0.7"/><rect x="34.8" y="46.0" width="8" height="8" fill="#8070c0" opacity="0.7"/><rect x="4.1" y="97.6" width="8" height="6" fill="#2060b0" opacity="0.7"/><rect x="25.4" y="75.0" width="6" height="6" fill="#60d0f0" opacity="0.7"/><rect x="20.8" y="60.3" width="5" height="6" fill="#8070c0" opacity="0.7"/><rect x="12.6" y="45.1" width="8" height="8" fill="#1880c8" opacity="0.7"/><rect x="2.4" y="67.2" width="6" height="6" fill="#60d0f0" opacity="0.7"/><rect x="24.4" y="36.5" width="6" height="5" fill="#8070c0" opacity="0.7"/><rect x="2.4" y="71.5" width="6" height="6" fill="#2060b0" opacity="0.7"/><rect x="11.9" y="64.9" width="5" height="6" fill="#1880c8" opacity="0.7"/><rect x="12.5" y="44.5" width="8" height="6" fill="#60d0f0" opacity="0.7"/><rect x="31.5" y="21.2" width="5" height="8" fill="#1880c8" opacity="0.7"/><rect x="12.4" y="31.6" width="6" height="5" fill="#60d0f0" opacity="0.7"/><rect x="7.5" y="50.3" width="8" height="5" fill="#30b0e8" opacity="0.7"/><rect x="24.0" y="95.5" width="8" height="5" fill="#2060b0" opacity="0.7"/><rect x="32.4" y="96.5" width="5" height="6" fill="#1880c8" opacity="0.7"/><rect x="35.4" y="51.7" width="5" height="5" fill="#30b0e8" opacity="0.7"/><rect x="21.2" y="28.8" width="8" height="5" fill="#60d0f0" opacity="0.7"/><rect x="13.6" y="84.9" width="5" height="8" fill="#60d0f0" opacity="0.7"/><rect x="23.6" y="49.1" width="8" height="6" fill="#2060b0" opacity="0.7"/><rect x="13.9" y="48.7" width="6" height="8" fill="#2060b0" opacity="0.7"/><rect x="1.4" y="48.4" width="5" height="5" fill="#2060b0" opacity="0.7"/><rect x="37.7" y="89.4" width="8" height="6" fill="#8070c0" opacity="0.7"/><rect x="38.0" y="93.6" width="5" height="5" fill="#2060b0" opacity="0.7"/><rect x="33.5" y="70.3" width="8" height="6" fill="#8070c0" opacity="0.7"/><rect x="13.6" y="32.0" width="5" height="8" fill="#60d0f0" opacity="0.7"/><rect x="4.8" y="33.5" width="5" height="8" fill="#8070c0" opacity="0.7"/><rect x="37.0" y="90.9" width="6" height="8" fill="#30b0e8" opacity="0.7"/><rect x="0.5" y="77.6" width="5" height="8" fill="#60d0f0" opacity="0.7"/><rect x="9.6" y="13.7" width="8" height="6" fill="#30b0e8" opacity="0.7"/><rect x="37.6" y="65.9" width="6" height="5" fill="#60d0f0" opacity="0.7"/><rect x="38.9" y="59.6" width="5" height="6" fill="#1880c8" opacity="0.7"/><rect x="7.9" y="59.0" width="5" height="5" fill="#1880c8" opacity="0.7"/><rect x="31.7" y="93.1" width="5" height="5" fill="#2060b0" opacity="0.7"/><rect x="25.1" y="87.9" width="5" height="6" fill="#1880c8" opacity="0.7"/><rect x="10.7" y="58.4" width="6" height="5" fill="#2060b0" opacity="0.7"/><rect x="12.9" y="84.1" width="5" height="5" fill="#30b0e8" opacity="0.7"/><rect x="36.7" y="39.1" width="5" height="5" fill="#a0a0c0" opacity="0.85"/><rect x="51.1" y="54.0" width="6" height="5" fill="#e040c0" opacity="0.85"/><rect x="46.7" y="58.4" width="6" height="6" fill="#e040c0" opacity="0.85"/><rect x="39.3" y="54.7" width="5" height="5" fill="#a0a0c0" opacity="0.85"/><rect x="32.1" y="78.4" width="5" height="5" fill="#c02090" opacity="0.85"/><rect x="46.2" y="71.3" width="6" height="5" fill="#a0a0c0" opacity="0.85"/><rect x="65.7" y="38.2" width="6" height="6" fill="#5040a0" opacity="0.85"/><rect x="68.1" y="60.1" width="5" height="5" fill="#8030a0" opacity="0.85"/><rect x="52.4" y="76.7" width="5" height="6" fill="#8030a0" opacity="0.85"/><rect x="48.2" y="87.8" width="6" height="6" fill="#a0a0c0" opacity="0.85"/><rect x="62.1" y="50.7" width="6" height="5" fill="#30a0d0" opacity="0.85"/><rect x="57.2" y="88.2" width="6" height="5" fill="#30a0d0" opacity="0.85"/><rect x="44.1" y="66.9" width="5" height="6" fill="#8030a0" opacity="0.85"/><rect x="41.0" y="58.3" width="5" height="5" fill="#30a0d0" opacity="0.85"/><rect x="65.5" y="45.7" width="5" height="6" fill="#c02090" opacity="0.85"/><rect x="33.0" y="41.9" width="6" height="6" fill="#a0a0c0" opacity="0.85"/><rect x="43.4" y="40.3" width="5" height="5" fill="#a0a0c0" opacity="0.85"/><rect x="60.5" y="91.1" width="5" height="6" fill="#a0a0c0" opacity="0.85"/><rect x="38.9" y="39.6" width="5" height="5" fill="#5040a0" opacity="0.85"/><rect x="55.4" y="80.2" width="6" height="6" fill="#e040c0" opacity="0.85"/><rect x="54.8" y="91.3" width="6" height="5" fill="#5040a0" opacity="0.85"/><rect x="51.0" y="93.4" width="6" height="5" fill="#5040a0" opacity="0.85"/><rect x="58.3" y="80.4" width="6" height="5" fill="#30a0d0" opacity="0.85"/><rect x="47.2" y="88.3" width="5" height="5" fill="#5040a0" opacity="0.85"/><rect x="60.4" y="90.0" width="6" height="5" fill="#8030a0" opacity="0.85"/><rect x="42.2" y="47.0" width="6" height="5" fill="#30a0d0" opacity="0.85"/><rect x="52.4" y="81.8" width="6" height="6" fill="#8030a0" opacity="0.85"/><rect x="43.7" y="51.1" width="6" height="5" fill="#8030a0" opacity="0.85"/><rect x="53.7" y="49.3" width="6" height="5" fill="#5040a0" opacity="0.85"/><rect x="69.7" y="63.8" width="5" height="6" fill="#a0a0c0" opacity="0.85"/><rect x="63.7" y="84.3" width="5" height="6" fill="#30a0d0" opacity="0.85"/><rect x="34.8" y="91.9" width="5" height="6" fill="#8030a0" opacity="0.85"/><rect x="65.9" y="73.9" width="5" height="5" fill="#e040c0" opacity="0.85"/><rect x="41.2" y="46.4" width="6" height="5" fill="#8030a0" opacity="0.85"/><rect x="55.6" y="75.5" width="5" height="6" fill="#8030a0" opacity="0.85"/><rect x="64.9" y="53.8" width="6" height="5" fill="#30a0d0" opacity="0.85"/><rect x="62.4" y="42.1" width="6" height="6" fill="#c02090" opacity="0.85"/><rect x="45.6" y="69.8" width="6" height="5" fill="#c02090" opacity="0.85"/><rect x="44.7" y="61.2" width="6" height="5" fill="#8030a0" opacity="0.85"/><rect x="56.5" y="79.5" width="6" height="6" fill="#8030a0" opacity="0.85"/><rect x="52.7" y="42.2" width="6" height="5" fill="#30a0d0" opacity="0.85"/><rect x="48.4" y="61.3" width="6" height="5" fill="#a0a0c0" opacity="0.85"/><rect x="67.8" y="57.5" width="6" height="6" fill="#e040c0" opacity="0.85"/><rect x="57.2" y="75.2" width="6" height="5" fill="#e040c0" opacity="0.85"/><rect x="57.6" y="67.2" width="5" height="6" fill="#a0a0c0" opacity="0.85"/><rect x="45.4" y="78.1" width="5" height="5" fill="#8030a0" opacity="0.85"/><rect x="46.1" y="90.2" width="6" height="5" fill="#c02090" opacity="0.85"/><rect x="67.4" y="43.5" width="6" height="6" fill="#a0a0c0" opacity="0.85"/><rect x="43.4" y="46.2" width="6" height="6" fill="#8030a0" opacity="0.85"/><rect x="58.8" y="41.4" width="5" height="6" fill="#e040c0" opacity="0.85"/><rect x="164.9" y="37.2" width="4" height="4" fill="#9090c8" opacity="0.7"/><rect x="183.5" y="37.2" width="6" height="6" fill="#b0b0d8" opacity="0.7"/><rect x="202.9" y="99.9" width="5" height="6" fill="#9090c8" opacity="0.7"/><rect x="177.3" y="90.8" width="4" height="4" fill="#b0b0d8" opacity="0.7"/><rect x="188.9" y="75.4" width="6" height="6" fill="#9090c8" opacity="0.7"/><rect x="169.1" y="29.6" width="5" height="6" fill="#5090c0" opacity="0.7"/><rect x="179.2" y="103.5" width="4" height="6" fill="#c050b0" opacity="0.7"/><rect x="167.2" y="49.1" width="4" height="6" fill="#c050b0" opacity="0.7"/><rect x="168.3" y="28.6" width="5" height="5" fill="#b0b0d8" opacity="0.7"/><rect x="161.5" y="86.7" width="5" height="5" fill="#b0b0d8" opacity="0.7"/><rect x="187.1" y="66.2" width="6" height="5" fill="#c050b0" opacity="0.7"/><rect x="193.6" y="39.8" width="6" height="5" fill="#9090c8" opacity="0.7"/><rect x="189.5" y="79.6" width="4" height="4" fill="#5090c0" opacity="0.7"/><rect x="171.5" y="28.1" width="6" height="5" fill="#7070b0" opacity="0.7"/><rect x="169.5" y="61.2" width="4" height="6" fill="#5090c0" opacity="0.7"/><rect x="206.4" y="22.4" width="5" height="6" fill="#7070b0" opacity="0.7"/><rect x="166.6" y="85.7" width="6" height="4" fill="#9090c8" opacity="0.7"/><rect x="177.6" y="33.7" width="4" height="5" fill="#c050b0" opacity="0.7"/><rect x="160.9" y="43.6" width="5" height="5" fill="#5090c0" opacity="0.7"/><rect x="194.0" y="19.5" width="6" height="4" fill="#5090c0" opacity="0.7"/><rect x="163.9" y="104.5" width="4" height="4" fill="#7070b0" opacity="0.7"/><rect x="181.4" y="82.4" width="5" height="5" fill="#9090c8" opacity="0.7"/><rect x="198.6" y="50.0" width="4" height="6" fill="#7070b0" opacity="0.7"/><rect x="179.2" y="56.0" width="4" height="6" fill="#6060a0" opacity="0.7"/><rect x="170.2" y="57.5" width="4" height="5" fill="#6060a0" opacity="0.7"/><rect x="197.1" y="49.3" width="4" height="5" fill="#9090c8" opacity="0.7"/><rect x="195.3" y="46.1" width="5" height="5" fill="#c050b0" opacity="0.7"/><rect x="177.7" y="49.4" width="4" height="4" fill="#b0b0d8" opacity="0.7"/><rect x="198.4" y="25.3" width="5" height="6" fill="#7070b0" opacity="0.7"/><rect x="167.8" y="14.1" width="6" height="5" fill="#c050b0" opacity="0.7"/><rect x="168.2" y="14.6" width="4" height="6" fill="#7070b0" opacity="0.7"/><rect x="181.7" y="29.2" width="4" height="5" fill="#6060a0" opacity="0.7"/><rect x="175.6" y="15.1" width="6" height="4" fill="#7070b0" opacity="0.7"/><rect x="179.8" y="48.9" width="4" height="4" fill="#7070b0" opacity="0.7"/><rect x="164.6" y="56.1" width="4" height="5" fill="#c050b0" opacity="0.7"/><rect x="165.7" y="96.9" width="6" height="4" fill="#5090c0" opacity="0.7"/><rect x="174.2" y="103.3" width="5" height="5" fill="#6060a0" opacity="0.7"/><rect x="172.2" y="36.7" width="5" height="6" fill="#b0b0d8" opacity="0.7"/><rect x="175.5" y="17.3" width="5" height="4" fill="#c050b0" opacity="0.7"/><rect x="190.3" y="21.7" width="6" height="4" fill="#9090c8" opacity="0.7"/><rect x="168.3" y="15.4" width="4" height="4" fill="#5090c0" opacity="0.7"/><rect x="185.0" y="42.8" width="5" height="5" fill="#6060a0" opacity="0.7"/><rect x="205.0" y="99.4" width="4" height="5" fill="#b0b0d8" opacity="0.7"/><rect x="196.8" y="70.7" width="5" height="4" fill="#b0b0d8" opacity="0.7"/><rect x="169.0" y="50.4" width="6" height="5" fill="#c050b0" opacity="0.7"/><rect x="176.4" y="75.2" width="5" height="4" fill="#5090c0" opacity="0.7"/><rect x="202.4" y="47.9" width="6" height="5" fill="#7070b0" opacity="0.7"/><rect x="177.8" y="50.6" width="4" height="5" fill="#5090c0" opacity="0.7"/><rect x="183.6" y="37.1" width="4" height="6" fill="#5090c0" opacity="0.7"/><rect x="196.9" y="97.1" width="6" height="5" fill="#6060a0" opacity="0.7"/><rect x="162.1" y="28.0" width="4" height="5" fill="#9090c8" opacity="0.7"/><rect x="197.2" y="75.0" width="4" height="5" fill="#7070b0" opacity="0.7"/><rect x="189.4" y="86.5" width="4" height="6" fill="#9090c8" opacity="0.7"/><rect x="182.0" y="95.4" width="6" height="6" fill="#b0b0d8" opacity="0.7"/><rect x="208.9" y="12.2" width="4" height="5" fill="#9090c8" opacity="0.7"/><rect x="176.6" y="41.0" width="5" height="4" fill="#5090c0" opacity="0.7"/><rect x="170.3" y="76.0" width="4" height="6" fill="#7070b0" opacity="0.7"/><rect x="188.7" y="13.1" width="4" height="5" fill="#7070b0" opacity="0.7"/><rect x="170.8" y="64.3" width="5" height="6" fill="#c050b0" opacity="0.7"/><rect x="175.6" y="94.1" width="4" height="5" fill="#7070b0" opacity="0.7"/><rect x="190.5" y="15.8" width="4" height="6" fill="#9090c8" opacity="0.7"/><rect x="202.1" y="21.4" width="5" height="4" fill="#9090c8" opacity="0.7"/><rect x="182.8" y="32.7" width="6" height="6" fill="#9090c8" opacity="0.7"/><rect x="191.4" y="82.8" width="6" height="5" fill="#6060a0" opacity="0.7"/><rect x="189.6" y="53.4" width="4" height="5" fill="#c050b0" opacity="0.7"/><rect x="181.7" y="47.3" width="4" height="6" fill="#9090c8" opacity="0.7"/><rect x="182.7" y="79.7" width="4" height="5" fill="#b0b0d8" opacity="0.7"/><rect x="169.4" y="82.1" width="6" height="6" fill="#5090c0" opacity="0.7"/><rect x="177.9" y="84.9" width="4" height="6" fill="#c050b0" opacity="0.7"/><rect x="170.5" y="44.6" width="4" height="5" fill="#7070b0" opacity="0.7"/><rect x="123.8" y="40.5" width="5" height="6" fill="#30a0c0" opacity="0.8"/><rect x="138.5" y="48.5" width="5" height="6" fill="#7050c0" opacity="0.8"/><rect x="143.2" y="58.9" width="5" height="6" fill="#4060b0" opacity="0.8"/><rect x="145.1" y="98.9" width="6" height="5" fill="#c040c0" opacity="0.8"/><rect x="148.0" y="36.2" width="5" height="5" fill="#30a0c0" opacity="0.8"/><rect x="117.5" y="68.8" width="6" height="5" fill="#30a0c0" opacity="0.8"/><rect x="138.3" y="52.9" width="6" height="5" fill="#c040c0" opacity="0.8"/><rect x="125.5" y="47.8" width="6" height="5" fill="#9030b0" opacity="0.8"/><rect x="124.4" y="94.1" width="6" height="5" fill="#30a0c0" opacity="0.8"/><rect x="111.0" y="84.6" width="6" height="6" fill="#c040c0" opacity="0.8"/><rect x="147.4" y="63.0" width="6" height="6" fill="#7050c0" opacity="0.8"/><rect x="149.9" y="49.5" width="6" height="6" fill="#9030b0" opacity="0.8"/><rect x="125.3" y="92.6" width="6" height="5" fill="#7050c0" opacity="0.8"/><rect x="104.5" y="43.5" width="5" height="5" fill="#30a0c0" opacity="0.8"/><rect x="147.7" y="35.1" width="6" height="6" fill="#c040c0" opacity="0.8"/><rect x="149.0" y="37.3" width="5" height="5" fill="#9030b0" opacity="0.8"/><rect x="116.7" y="93.8" width="5" height="5" fill="#4060b0" opacity="0.8"/><rect x="118.3" y="51.1" width="6" height="6" fill="#c040c0" opacity="0.8"/><rect x="119.6" y="36.9" width="5" height="5" fill="#7050c0" opacity="0.8"/><rect x="115.4" y="43.8" width="6" height="6" fill="#7050c0" opacity="0.8"/><rect x="110.2" y="36.1" width="5" height="5" fill="#4060b0" opacity="0.8"/><rect x="133.6" y="93.3" width="6" height="6" fill="#7050c0" opacity="0.8"/><rect x="134.6" y="95.4" width="6" height="6" fill="#7050c0" opacity="0.8"/><rect x="133.1" y="54.1" width="5" height="5" fill="#7050c0" opacity="0.8"/><rect x="108.7" y="85.3" width="6" height="6" fill="#c040c0" opacity="0.8"/><rect x="140.9" y="64.4" width="5" height="6" fill="#30a0c0" opacity="0.8"/><rect x="128.0" y="61.8" width="5" height="6" fill="#7050c0" opacity="0.8"/><rect x="132.2" y="37.0" width="5" height="6" fill="#30a0c0" opacity="0.8"/><rect x="116.9" y="81.1" width="6" height="5" fill="#4060b0" opacity="0.8"/><rect x="134.8" y="59.1" width="6" height="6" fill="#30a0c0" opacity="0.8"/><rect x="118.3" y="57.5" width="6" height="6" fill="#c040c0" opacity="0.8"/><rect x="106.3" y="48.9" width="5" height="6" fill="#c040c0" opacity="0.8"/><rect x="132.1" y="71.1" width="5" height="5" fill="#4060b0" opacity="0.8"/><rect x="115.5" y="98.7" width="5" height="6" fill="#30a0c0" opacity="0.8"/><rect x="148.0" y="82.9" width="5" height="5" fill="#9030b0" opacity="0.8"/><rect x="147.3" y="98.3" width="5" height="6" fill="#c040c0" opacity="0.8"/><rect x="149.3" y="65.0" width="6" height="5" fill="#30a0c0" opacity="0.8"/><rect x="114.9" y="97.2" width="5" height="5" fill="#30a0c0" opacity="0.8"/><rect x="135.7" y="65.4" width="6" height="5" fill="#30a0c0" opacity="0.8"/><rect x="122.0" y="46.7" width="5" height="6" fill="#30a0c0" opacity="0.8"/>
<path d="M20 0L45 38M33 0L54 38M45 0L60 38M54 0L64 38M65 0L67 38M76 0L70 38M109 0L102 38M123 0L109 38M138 0L116 38M154 0L125 38" stroke="#2a8ae8" stroke-width="1.6" opacity="0.9"/>
<rect x="0" y="96" width="209" height="8" fill="#5050a0" opacity="0.6"/>
<rect x="17" y="96" width="28" height="8" fill="#e030c0"/>
<rect x="0" y="97" width="14" height="7" fill="#30c0e8"/>
<rect x="47" y="93" width="18" height="8" fill="#e0a050"/>
<path d="M0 104L55 100L65 158H0Z" fill="url(#flr)"/>
<path d="M0 104L50 100L48 108L0 112Z" fill="#8a90c0"/>
<rect x="17" y="108" width="25" height="6" fill="#d040c0" opacity="0.8"/>
<path d="M42 113C50 108 62 112 64 120L60 132C52 126 44 122 42 113Z" fill="#d8dcf0"/>
<path d="M47 133C52 130 58 132 58 136L54 140C50 139 47 137 47 133Z" fill="#d0d4ee"/>
<path d="M104 104L209 98V158H104Z" fill="#5060b0"/>
<path d="M104 120L150 118V158H104Z" fill="#2a6a9a" opacity="0.55"/><ellipse cx="125" cy="142" rx="22" ry="12" fill="#30a0a8" opacity="0.35"/>
<path d="M182 100L209 98V158H182Z" fill="#7078b8"/>
<rect x="180" y="110" width="10" height="14" fill="#c8c8e0" opacity="0.7"/>
<path d="M190 118L200 116V122H190Z" fill="#d0d0e8" opacity="0.7"/>
<path d="M12 135L17.5 148L23 135" stroke="#f0f0f0" stroke-width="2.2" fill="none"/>
<!-- woman 1 -->
<path d="M98 54C104 56 107 66 109 80C114 92 124 102 138 110L136 117C120 112 108 104 101 96C102 112 104 136 104 158H69C69 140 70 125 72 116C68 112 66 104 66 96L62 96C62 80 64 62 72 56Z" fill="#121212"/>
<path d="M72 54L98 53C98 70 99 95 98 120L76 120C72 100 70 75 72 54Z" fill="#bf9a84"/>
<path d="M76 105L97 106" stroke="#2a2020" stroke-width="0.9"/>
<path d="M62 92L73 90L74 150L63 150Z" fill="#101010"/>
<path d="M84 11C74 12 68 22 67 36C66 56 66 76 68 95L76 95C78 80 82 66 84 55C86 48 88 38 90 30C92 24 96 22 100 24C98 16 92 10 84 11Z" fill="#2e2622"/>
<path d="M89 27C94 24 100 30 101 38C101 46 98 50 94 50L88 50C87 42 87 32 89 27Z" fill="#c29478"/>
<path d="M85 47L95 47L96 55L84 55Z" fill="#b48a70"/>
<!-- woman 2 -->
<path d="M163 24C152 24 149 36 150 50C150 62 148 72 152 80L158 66C156 54 156 42 160 36C168 40 172 50 174 60L182 76C182 56 180 28 163 24Z" fill="#a07850"/>
<path d="M154 31C162 29 170 38 170 48C169 55 163 58 158 57C154 52 152 44 154 31Z" fill="#d6ac8c"/>
<path d="M156 58C166 56 180 60 183 70C186 90 186 120 184 158H148C148 130 149 116 150 104L138 108L134 102C140 92 146 74 156 58Z" fill="#ececec"/>
<path d="M156 84C150 92 142 98 136 100L134 96C140 92 146 86 152 78Z" fill="#e2e2e2"/>
<path d="M123 96C129 94 134 96 136 100L134 106C128 104 124 102 123 96Z" fill="#c89878"/>
<path d="M138 110C144 108 150 112 152 117L146 124C142 120 138 118 138 110Z" fill="#c89878"/>
</g>
</svg>
</body></html>
